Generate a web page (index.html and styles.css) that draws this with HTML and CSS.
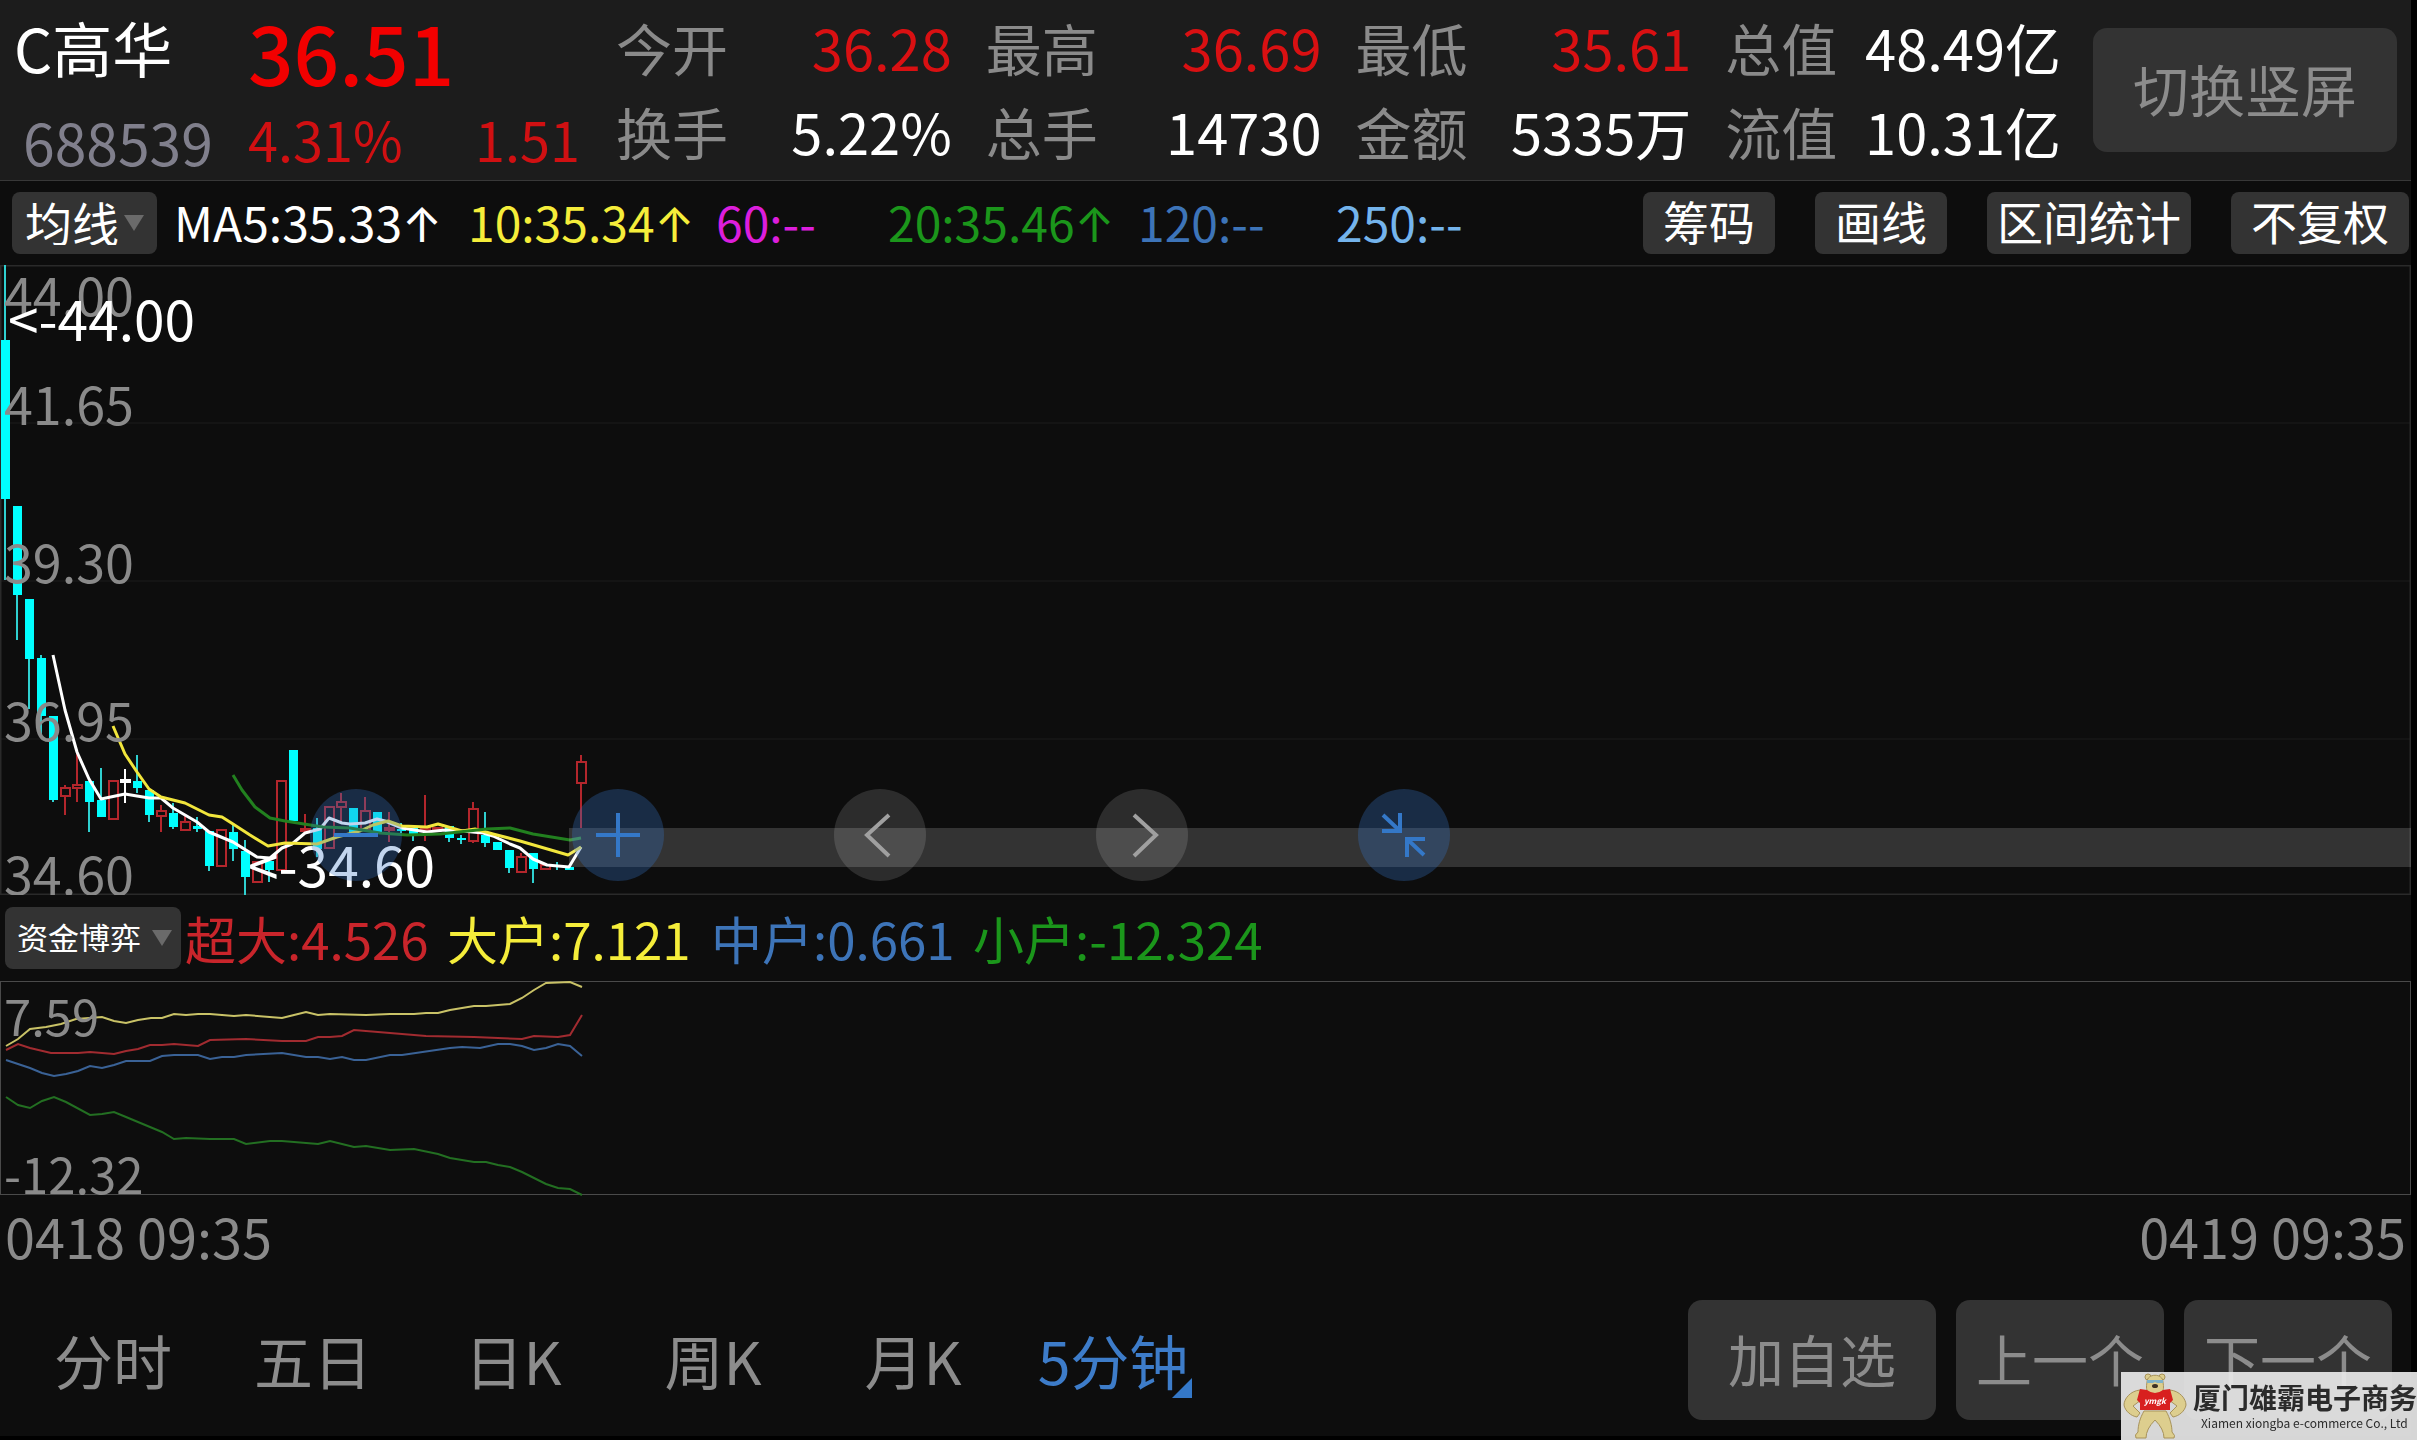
FILE: index.html
```html
<!DOCTYPE html>
<html lang="zh-CN">
<head>
    <meta charset="UTF-8">
    <meta name="viewport" content="width=device-width, initial-scale=1.0">
    <title>C高华 688539</title>
    <link rel="stylesheet" href="styles.css">
</head>
<body>
    <div class="app">
        <header class="quote">
            <div class="stock">
                <h1>C高华</h1>
                <span class="code">688539</span>
            </div>
            <div class="price">
                <strong>36.51</strong>
                <div class="change"><span>4.31%</span><span>1.51</span></div>
            </div>
            <dl class="stats">
                <div><dt>今开</dt><dd class="up">36.28</dd></div>
                <div><dt>最高</dt><dd class="up">36.69</dd></div>
                <div><dt>最低</dt><dd class="up">35.61</dd></div>
                <div><dt>总值</dt><dd>48.49亿</dd></div>
                <div><dt>换手</dt><dd>5.22%</dd></div>
                <div><dt>总手</dt><dd>14730</dd></div>
                <div><dt>金额</dt><dd>5335万</dd></div>
                <div><dt>流值</dt><dd>10.31亿</dd></div>
            </dl>
            <button type="button" class="btn rotate">切换竖屏</button>
        </header>

        <div class="toolbar">
            <div class="picker">
                <select class="ma-select" aria-label="主图指标"><option>均线</option></select>
            </div>
            <div class="ma-list">
                <span class="white">MA5:35.33<i>↑</i></span>
                <span class="yellow">10:35.34<i>↑</i></span>
                <span class="magenta">60:--</span>
                <span class="green">20:35.46<i>↑</i></span>
                <span class="blue">120:--</span>
                <span class="sky">250:--</span>
            </div>
            <div class="tools">
                <button type="button">筹码</button>
                <button type="button">画线</button>
                <button type="button">区间统计</button>
                <button type="button">不复权</button>
            </div>
        </div>

        <main>
            <div class="chart">
                <svg class="kline" role="img" aria-label="5分钟K线">
                    <g class="grid">
                        <line x1="0" y1="158" x2="100%" y2="158"/>
                        <line x1="0" y1="316" x2="100%" y2="316"/>
                        <line x1="0" y1="474" x2="100%" y2="474"/>
                    </g>
                    <g class="frame">
                        <line x1="0" y1="0" x2="100%" y2="0"/>
                        <line x1="0" y1="630" x2="100%" y2="630"/>
                        <line x1="0" y1="0" x2="0" y2="630"/>
                        <line x1="100%" y1="0" x2="100%" y2="630"/>
                    </g>
                    <g id="candles"></g>
                    <g class="average">
                        <polyline class="ma5" points="53,390 65,445 77,487 89,514 101,534 125,529 149,533 161,533 173,543 197,557 209,567 233,577 257,592 270,593 282,583 292,579 305,568 320,564 329,553 342,558 350,559 365,558 377,554 385,556 402,563 427,567 445,565 462,566 483,568 493,571 510,579 520,583 533,594 547,600 569,602 581,582"/>
                        <polyline class="ma10" points="113,461 125,489 137,507 149,524 161,532 185,538 197,544 209,550 222,552 233,559 250,570 268,581 285,578 317,579 337,572 360,566 373,560 388,556 402,561 427,562 438,559 462,566 475,564 493,569 520,576 568,590 581,582"/>
                        <polyline class="ma20" points="233,510 242,525 255,542 270,553 285,556 323,562 350,563 380,568 407,570 440,569 487,564 510,563 533,569 570,575 581,573"/>
                    </g>
                    <g class="axis">
                        <text x="4" y="51">44.00</text>
                        <text x="4" y="160">41.65</text>
                        <text x="4" y="318">39.30</text>
                        <text x="4" y="476">36.95</text>
                        <text x="4" y="630">34.60</text>
                    </g>
                    <g class="extreme">
                        <text x="8" y="76">&lt;-44.00</text>
                        <text x="248" y="622">&lt;-34.60</text>
                    </g>
                    <rect class="band" x="569" y="563" width="100%" height="39"/>
                </svg>
                <div class="chart-controls">
                    <button type="button" class="accent" aria-label="缩小">
                        <svg viewBox="0 0 92 92"><path d="M24 46H68"/></svg>
                    </button>
                    <button type="button" class="accent" aria-label="放大">
                        <svg viewBox="0 0 92 92"><path d="M24 46H68M46 24V68"/></svg>
                    </button>
                    <button type="button" aria-label="左移">
                        <svg viewBox="0 0 92 92"><path d="M55 26L33 46L55 67"/></svg>
                    </button>
                    <button type="button" aria-label="右移">
                        <svg viewBox="0 0 92 92"><path d="M38 26L60 46L38 67"/></svg>
                    </button>
                    <button type="button" class="accent" aria-label="收起">
                        <svg viewBox="0 0 92 92"><path d="M24 42H42V24M42 42L25 26M67 50H49V68M49 50L66 66"/></svg>
                    </button>
                </div>
            </div>

            <div class="funds">
                <div class="picker">
                    <select class="fund-select" aria-label="副图指标"><option>资金博弈</option></select>
                </div>
                <span class="red">超大:4.526</span>
                <span class="yellow">大户:7.121</span>
                <span class="blue">中户:0.661</span>
                <span class="green">小户:-12.324</span>
            </div>

            <svg class="flow" role="img" aria-label="资金博弈">
                <polyline class="f-yellow" points="5,64 17,57 29,47 45,45 60,42 75,37 101,35 113,39 125,41 137,38 150,36 161,36 173,32 185,33 197,32 209,32 221,33 233,34 245,33 281,36 293,33 305,30 317,33 329,32 365,33 389,32 413,32 425,31 437,31 449,28 473,24 485,24 509,22 521,16 533,8 545,1 569,0 581,5"/>
                <polyline class="f-red" points="5,68 17,62 29,66 50,71 77,71 89,70 113,72 125,69 137,67 149,63 161,63 173,62 197,64 209,58 245,57 281,59 305,59 317,55 329,55 341,54 353,48 389,51 425,54 473,55 521,57 533,54 557,55 569,53 581,33"/>
                <polyline class="f-blue" points="5,78 17,82 29,86 41,91 53,94 65,92 77,89 89,84 101,86 113,83 125,79 149,79 161,74 173,73 197,73 209,77 221,75 233,75 245,73 281,71 305,75 317,75 329,77 341,75 353,78 365,78 389,73 401,73 449,66 461,65 479,66 497,62 509,62 521,64 533,68 545,66 557,62 569,64 581,74"/>
                <polyline class="f-green" points="5,115 17,123 29,126 41,119 53,115 65,120 89,133 101,132 113,130 125,135 149,145 161,150 173,157 185,156 209,157 233,157 245,162 269,159 281,159 317,162 329,159 353,165 365,164 389,168 413,167 437,172 449,176 473,180 485,180 497,183 509,185 521,190 533,196 545,202 557,206 569,207 581,213"/>
                <text x="3" y="54">7.59</text>
                <text x="3" y="212">-12.32</text>
            </svg>

            <div class="dates">
                <time datetime="04-18T09:35">0418 09:35</time>
                <time datetime="04-19T09:35">0419 09:35</time>
            </div>
        </main>

        <footer>
            <nav class="periods">
                <a href="#">分时</a>
                <a href="#">五日</a>
                <a href="#">日K</a>
                <a href="#">周K</a>
                <a href="#">月K</a>
                <a href="#" class="active"><span>5分钟</span></a>
            </nav>
            <div class="actions">
                <button type="button" class="btn">加自选</button>
                <button type="button" class="btn">上一个</button>
                <button type="button" class="btn">下一个</button>
            </div>
        </footer>
    </div>

    <div class="brand">
        <svg viewBox="0 0 64 66">
            <g fill="#ddce8e" stroke="#a8935a" stroke-width="1">
                <path d="M21 38H43C47 45 49 53 49 59Q53 63 51 65H41Q41 56 32 47Q23 56 23 65H13Q11 62 15 59C15 52 17 45 21 38Z"/>
                <path d="M17 17C7 18 1 26 1 32C2 38 8 43 14 44L17 40L10 33L18 27Z"/>
                <path d="M47 17C57 18 63 26 63 32C62 38 56 43 50 44L47 40L54 33L46 27Z"/>
                <circle cx="25" cy="4" r="3"/><circle cx="39" cy="4" r="3"/>
                <path d="M24 9C24 0 40 0 40 9C42 20 38 21 32 21C26 21 22 20 24 9Z"/>
            </g>
            <path fill="#d8201f" d="M17 16L24 17Q32 23 40 17L47 16L50 27L47 30V37H17V30L14 27Z"/>
            <path fill="#7fb2c8" d="M24 7H40V10H34L32 9L30 10H24Z"/>
            <ellipse cx="32" cy="13" rx="3" ry="2" fill="#3c3124"/>
            <text x="32" y="31" text-anchor="middle">ymgk</text>
        </svg>
        <div>
            <b>厦门雄霸电子商务</b>
            <small>Xiamen xiongba e-commerce Co., Ltd</small>
        </div>
    </div>

    <script>
        // one row per bar: colour, high, body top, body bottom, low
        const bars = [
            ['d', 0, 75, 234, 315], ['d', 241, 241, 330, 375], ['d', 334, 334, 394, 444], ['d', 390, 393, 451, 470],
            ['d', 451, 451, 535, 537], ['u', 520, 523, 531, 550], ['u', 487, 520, 523, 537], ['d', 516, 516, 537, 567],
            ['d', 503, 535, 552, 552], ['u', 516, 516, 554, 554], ['n', 504, 515, 517, 538], ['d', 490, 516, 523, 528],
            ['d', 525, 525, 550, 557], ['u', 540, 546, 551, 567], ['d', 538, 548, 562, 564], ['u', 551, 557, 565, 566],
            ['d', 552, 561, 564, 567], ['d', 566, 566, 601, 606], ['u', 565, 565, 601, 601], ['d', 560, 567, 584, 596],
            ['d', 575, 586, 612, 630], ['u', 597, 597, 617, 617], ['d', 596, 596, 605, 617], ['u', 516, 516, 605, 605],
            ['d', 485, 485, 556, 558], ['u', 549, 564, 566, 567], ['d', 553, 563, 584, 592], ['u', 542, 542, 583, 583],
            ['u', 528, 537, 542, 557], ['d', 543, 543, 568, 568], ['u', 532, 546, 565, 565], ['d', 547, 547, 567, 567],
            ['u', 547, 563, 565, 577], ['d', 558, 564, 566, 568], ['d', 563, 563, 571, 576], ['u', 530, 563, 565, 576],
            ['u', 562, 563, 565, 567], ['d', 561, 561, 573, 577], ['d', 570, 573, 575, 579], ['u', 537, 544, 576, 578],
            ['d', 547, 570, 578, 582], ['d', 577, 577, 585, 585], ['d', 585, 585, 603, 608], ['u', 588, 592, 607, 607],
            ['d', 588, 588, 604, 618], ['u', 600, 600, 604, 604], ['d', 597, 600, 602, 605], ['d', 602, 602, 605, 605],
            ['u', 490, 497, 518, 563]
        ];
        const step = 12;
        let out = '';

        bars.forEach(function(bar, i) {
            const [type, high, top, bottom, low] = bar;
            const x = 5 + i * step;
            out += `<g class="bar-${type}"><path d="M${x} ${high}V${top}M${x} ${bottom}V${low}"/>`;
            out += `<rect x="${x - 4}" y="${top}" width="9" height="${bottom - top}"/></g>`;
        });

        document.getElementById('candles').innerHTML = out;
    </script>
</body>
</html>
```
FILE: styles.css
```css
* {
    box-sizing: border-box;
}

body {
    margin: 0;
    background-color: #000;
    color: #fff;
    font-family: "Noto Sans CJK SC", sans-serif;
    line-height: 1;
}

button,
select {
    font-family: inherit;
    line-height: 1;
    border: none;
    padding: 0;
    cursor: pointer;
}

.app {
    margin: 0 6px 4px 0;
    background-color: #0d0d0d;
}

.red { color: #c9252b; }
.yellow { color: #f5ed3a; }
.magenta { color: #dc1edc; }
.green { color: #1b961b; }
.blue { color: #3d74b8; }
.sky { color: #74b4ec; }

/* quote header */
.quote {
    display: flex;
    align-items: flex-start;
    height: 181px;
    padding: 5px 14px 0;
    background-color: #1c1c1c;
    border-bottom: 1px solid #383838;
}

.stock {
    width: 234px;
    flex: none;
}

.stock h1 {
    margin: 0;
    font-size: 60px;
    font-weight: 400;
    line-height: 84px;
}

.code {
    display: block;
    padding-left: 9px;
    font-size: 57px;
    line-height: 104px;
    color: #807f8c;
}

.price {
    width: 332px;
    flex: none;
    color: #f20000;
}

.price strong {
    display: block;
    font-size: 80px;
    font-weight: 500;
    line-height: 92px;
}

.change {
    display: flex;
    justify-content: space-between;
    font-size: 54px;
    line-height: 84px;
    color: #d01012;
}

.stats {
    flex: 1;
    display: grid;
    grid-template-columns: repeat(4, 1fr);
    column-gap: 34px;
    margin: 0 32px 0 36px;
    font-size: 56px;
    line-height: 84px;
}

.stats div {
    display: flex;
    justify-content: space-between;
    white-space: nowrap;
}

.stats dt {
    color: #8a8a8a;
}

.stats dd {
    margin: 0;
}

.stats .up {
    color: #d91012;
}

.btn {
    height: 120px;
    padding-bottom: 4px;
    border-radius: 14px;
    background-color: #333;
    color: #8c8c8c;
    font-size: 56px;
}

.rotate {
    flex: none;
    width: 304px;
    height: 124px;
    margin-top: 23px;
}

/* moving averages */
.toolbar {
    display: flex;
    align-items: center;
    height: 84px;
    padding: 0 2px 0 12px;
}

.picker {
    position: relative;
}

.picker::after {
    content: "";
    position: absolute;
    right: 13px;
    top: 23px;
    border: 10px solid transparent;
    border-top: 16px solid #6a6a6a;
    border-bottom: none;
    pointer-events: none;
}

.picker select {
    appearance: none;
    display: block;
    height: 62px;
    padding-bottom: 4px;
    border-radius: 8px;
    background-color: #333;
    color: #fff;
}

.picker .ma-select {
    width: 145px;
    padding-left: 13px;
    font-size: 47px;
}

.ma-list {
    flex: 1;
    display: grid;
    grid-template-columns: 294px 248px 172px 250px 198px auto;
    padding-left: 17px;
    font-size: 48px;
    white-space: nowrap;
}

.ma-list i {
    font-family: Inter, sans-serif;
    font-style: normal;
}

.tools {
    display: flex;
    gap: 40px;
}

.tools button {
    height: 62px;
    padding: 0 20px 6px;
    border-radius: 8px;
    background-color: #333;
    color: #fff;
    font-size: 46px;
}

.tools button:nth-child(3) {
    padding: 0 10px 6px;
}

/* candlestick chart */
.chart {
    position: relative;
}

.kline {
    display: block;
    width: 100%;
    height: 630px;
}

.grid line {
    stroke: #141414;
    stroke-width: 2;
}

.frame line {
    stroke: #2a2a2a;
    stroke-width: 3;
}

.bar-d path { stroke: #2fd0d0; stroke-width: 2; }
.bar-d rect { fill: #0ff; }
.bar-u { stroke: #b3262c; stroke-width: 2; fill: none; }
.bar-n { stroke: #fff; stroke-width: 2; fill: #fff; }

.average polyline {
    fill: none;
    stroke-width: 3;
    stroke-linejoin: round;
}

.average .ma5 { stroke: #fff; }
.average .ma10 { stroke: #f2e63c; }
.average .ma20 { stroke: #22801f; }

.axis text {
    fill: #8a8a8a;
    font-size: 52px;
}

.extreme text {
    fill: #fff;
    font-size: 55px;
}

.band {
    fill: rgba(255, 255, 255, 0.16);
}

.chart-controls {
    position: absolute;
    left: 310px;
    bottom: 14px;
    display: flex;
    gap: 170px;
}

.chart-controls button {
    width: 92px;
    height: 92px;
    border-radius: 50%;
    background-color: rgba(255, 255, 255, 0.13);
    color: #a0a0a0;
}

.chart-controls .accent {
    background-color: rgba(52, 115, 200, 0.3);
    color: #3478c8;
}

.chart-controls svg {
    display: block;
    fill: none;
    stroke: currentColor;
    stroke-width: 4;
}

/* fund flow */
.funds {
    display: grid;
    grid-template-columns: 180px 262px 264px 262px auto;
    align-items: center;
    height: 86px;
    padding-left: 5px;
    font-size: 51px;
    white-space: nowrap;
}

.picker .fund-select {
    width: 176px;
    padding-left: 12px;
    font-size: 31px;
}

.funds .picker::after {
    right: 13px;
}

.flow {
    display: block;
    width: 100%;
    height: 214px;
    border: 1px solid #4a4a4a;
    overflow: visible;
}

.flow polyline {
    fill: none;
    stroke-width: 2;
}

.flow .f-yellow { stroke: #c9c267; }
.flow .f-red { stroke: #a12b30; }
.flow .f-blue { stroke: #3a6296; }
.flow .f-green { stroke: #236f22; }

.flow text {
    fill: #8a8a8a;
    font-size: 49px;
}

.dates {
    display: flex;
    justify-content: space-between;
    padding: 0 5px;
    font-size: 54px;
    line-height: 82px;
    margin-bottom: 8px;
    color: #8a8a8a;
}

/* bottom bar */
footer {
    display: flex;
    justify-content: space-between;
    align-items: center;
    height: 151px;
    padding: 0 19px 2px 13px;
}

.periods {
    display: grid;
    grid-template-columns: repeat(6, 200px);
    text-align: center;
    font-size: 59px;
}

.periods a {
    color: #8c8c8c;
    text-decoration: none;
}

.periods .active {
    color: #3d7cc9;
}

.active span {
    position: relative;
}

.active span::after {
    content: "";
    position: absolute;
    right: -4px;
    bottom: 4px;
    border-left: 20px solid transparent;
    border-bottom: 20px solid #3478c8;
}

.actions {
    display: flex;
    gap: 20px;
}

.actions .btn {
    width: 208px;
}

.actions .btn:first-child {
    width: 248px;
}

.brand {
    position: fixed;
    right: 0;
    bottom: 0;
    display: flex;
    align-items: center;
    gap: 6px;
    padding: 1px 0 1px 2px;
    background-color: rgba(232, 232, 232, 0.92);
    color: #2b2b2b;
    white-space: nowrap;
}

.brand svg {
    width: 64px;
    height: 66px;
}

.brand svg text {
    fill: #fff;
    font-size: 8px;
    font-weight: 700;
    font-style: italic;
}

.brand b {
    display: block;
    font-size: 28px;
}

.brand small {
    display: block;
    margin-top: 6px;
    padding-left: 8px;
    font-size: 12px;
}
```
